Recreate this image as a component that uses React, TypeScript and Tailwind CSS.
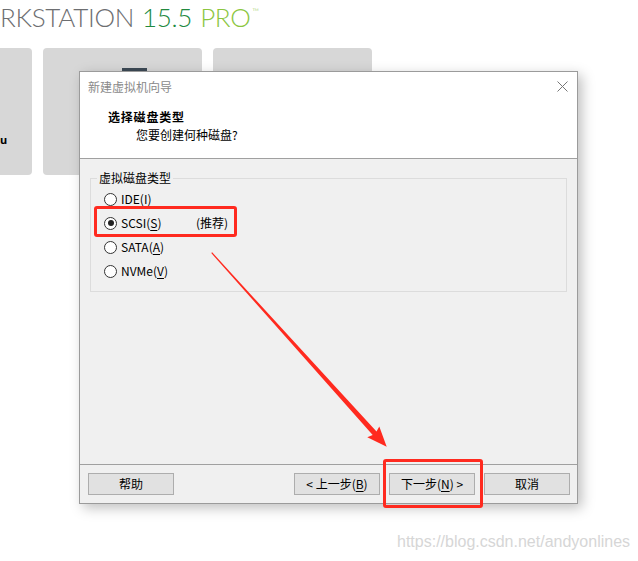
import React from 'react';

const cjk = { fontFamily: '"Noto Sans CJK SC", "Noto Sans", sans-serif' };

function Radio({ checked, label, mnemonic, extra }: { checked?: boolean; label: string; mnemonic: string; extra?: string }) {
  return (
    <div className="flex h-[24px] items-center pl-[7px]">
      <span className="flex h-[13px] w-[13px] items-center justify-center rounded-full border border-[#333333] bg-white">
        {checked && <span className="h-[6px] w-[6px] rounded-full bg-[#222222]" />}
      </span>
      <span className="ml-[4px] w-[75px] text-[12px] leading-[16px] text-black">
        {label}(<span className="underline underline-offset-2">{mnemonic}</span>)
      </span>
      {extra && <span className="text-[12px] leading-[16px] text-black">{extra}</span>}
    </div>
  );
}

function Button({ children }: { children: React.ReactNode }) {
  return (
    <button className="flex h-[22px] w-[86px] items-center justify-center border border-[#adadad] bg-[#e1e1e1] text-[12px] leading-[16px] text-black">
      {children}
    </button>
  );
}

export default function App() {
  return (
    <div className="relative h-[561px] w-[638px] overflow-hidden bg-white">
      {/* Background app header */}
      <h1
        className="flex h-[34px] items-start whitespace-nowrap pt-[1px] text-[26px] font-light leading-[32px] tracking-[-0.3px] text-[#6d6e71]"
        style={{ fontFamily: 'Lato, "Open Sans", sans-serif' }}
      >
        <span>RKSTATION</span>
        <span className="ml-[8px] text-[#22893f]">15.5</span>
        <span className="ml-[8px] text-[#8cc63f]">PRO</span>
        <span className="ml-[2px] mt-[6px] text-[9px] leading-[9px] text-[#8cc63f]">™</span>
      </h1>

      {/* Background tiles */}
      <div className="mt-[14px] ml-[-127px] flex gap-[11px]">
        <div className="h-[127px] w-[159px] rounded-[4px] bg-[#d7d7d7]">
          <p className="mt-[86px] ml-[127px] text-[11px] font-bold leading-[12px] text-black">u</p>
        </div>
        <div className="h-[127px] w-[159px] rounded-[4px] bg-[#d7d7d7]">
          <div className="mt-[20px] ml-[79px] h-[10px] w-[25px] bg-[#3d4a56]" />
        </div>
        <div className="h-[127px] w-[159px] rounded-[4px] bg-[#d7d7d7]" />
      </div>

      {/* Wizard dialog */}
      <div
        className="absolute left-[79px] top-[71px] flex w-[499px] flex-col border border-[#9b9b9b] bg-[#f0f0f0] shadow-[4px_4px_12px_rgba(0,0,0,0.25)]"
        style={cjk}
      >
        <div className="relative h-[87px] border-b border-[#a0a0a0] bg-white">
          <div className="flex h-[30px] items-center pl-[8px] text-[12px] leading-[16px] text-[#8a8a8a]">新建虚拟机向导</div>
          <svg className="absolute right-[9px] top-[9px] h-[11px] w-[11px]" viewBox="0 0 11 11">
            <path d="M0.5 0.5L10.5 10.5M10.5 0.5L0.5 10.5" stroke="#777777" strokeWidth="1" />
          </svg>
          <div className="mt-[7px] pl-[28px] text-[12px] font-bold leading-[16px] tracking-[0.8px] text-black">选择磁盘类型</div>
          <div className="mt-[2px] pl-[56px] text-[12px] leading-[16px] text-black">您要创建何种磁盘?</div>
        </div>

        <div className="h-[305px] px-[10px] pt-[11px]">
          <fieldset className="border border-[#dcdcdc] pb-[8px] pl-[6px]">
            <legend className="px-[2px] text-[12px] leading-[16px] text-black">虚拟磁盘类型</legend>
            <div className="pt-[1px]">
              <Radio label="IDE" mnemonic="I" />
              <Radio checked label="SCSI" mnemonic="S" extra="(推荐)" />
              <Radio label="SATA" mnemonic="A" />
              <Radio label="NVMe" mnemonic="V" />
            </div>
          </fieldset>
        </div>

        <div className="flex h-[39px] items-start border-t border-[#a0a0a0] pl-[8px] pr-[7px] pt-[8px]">
          <Button>帮助</Button>
          <div className="ml-auto flex gap-[9px]">
            <Button>
              &lt; 上一步(<span className="underline underline-offset-2">B</span>)
            </Button>
            <Button>
              下一步(<span className="underline underline-offset-2">N</span>) &gt;
            </Button>
            <Button>取消</Button>
          </div>
        </div>
      </div>

      {/* Annotations */}
      <div className="absolute left-[94px] top-[206px] h-[31px] w-[143px] rounded-[3px] border-[3px] border-[#ff2a1f]" />
      <div className="absolute left-[383px] top-[459px] h-[49px] w-[100px] rounded-[3px] border-[3px] border-[#ff2a1f]" />
      <svg className="absolute left-0 top-0 h-[561px] w-[638px]" viewBox="0 0 638 561">
        <polygon
          points="211.25,253.1 212.15,252.3 376.5,431.6 379.3,426.4 386.7,446.7 367.3,437.2 372.7,435"
          fill="#ff2a1f"
        />
      </svg>

      {/* Watermark */}
      <p
        className="absolute left-[397px] top-[532px] whitespace-nowrap text-[16px] leading-[20px] text-[#d6d6d6]"
        style={{ fontFamily: '"Liberation Sans", Arial, sans-serif' }}
      >
        https://blog.csdn.net/andyonlines
      </p>
    </div>
  );
}
